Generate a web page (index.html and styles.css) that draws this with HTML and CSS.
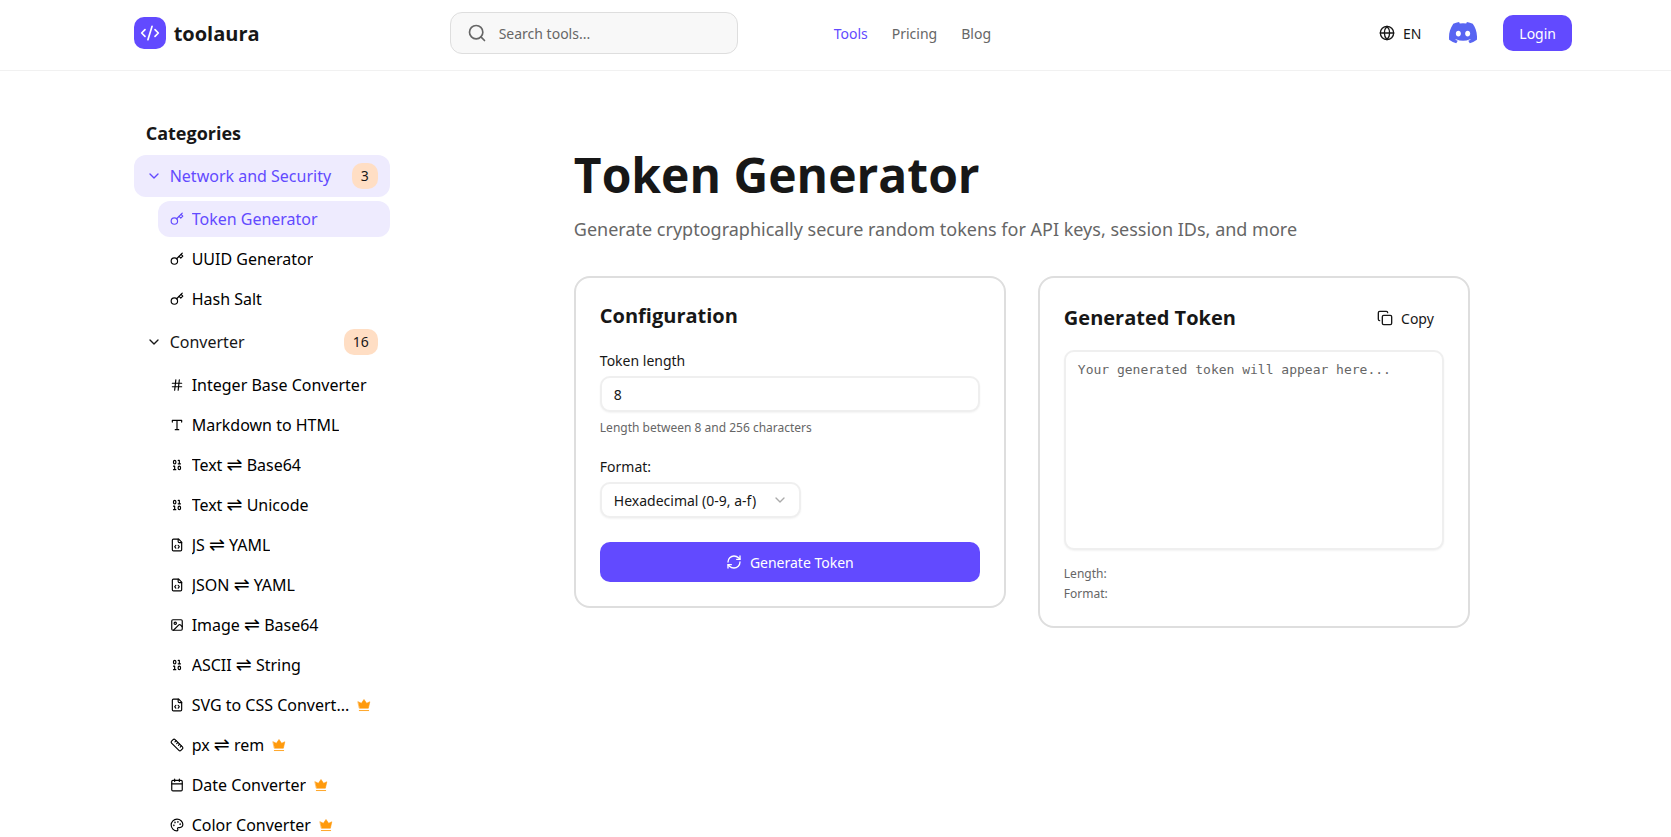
FILE: index.html
```
<!DOCTYPE html>
<html lang="en">
<head>
  <meta charset="UTF-8" />
  <meta name="viewport" content="width=device-width, initial-scale=1.0" />
  <title>Token Generator - toolaura</title>
  <link rel="stylesheet" href="styles.css">
</head>
<body>
  <!-- shared icons -->
  <svg class="sprite" aria-hidden="true">
    <symbol id="i-chevron" viewBox="0 0 24 24"><path d="m6 9 6 6 6-6"/></symbol>
    <symbol id="i-key" viewBox="0 0 24 24"><circle cx="7.5" cy="15.5" r="5.5"/><path d="m21 2-9.6 9.6"/><path d="m15.5 7.5 3 3L22 7l-3-3"/></symbol>
    <symbol id="i-hash" viewBox="0 0 24 24"><path d="M4 9h16M4 15h16M10 3 8 21M16 3l-2 18"/></symbol>
    <symbol id="i-type" viewBox="0 0 24 24"><path d="M4 7V4h16v3M9 20h6M12 4v16"/></symbol>
    <symbol id="i-binary" viewBox="0 0 24 24"><rect x="14" y="14" width="4" height="6" rx="2"/><rect x="6" y="4" width="4" height="6" rx="2"/><path d="M6 20h4M14 10h4M6 14h2v6M14 4h2v6"/></symbol>
    <symbol id="i-file" viewBox="0 0 24 24"><path d="M10 12.500 8 15l2 2.500M14 12.500l2 2.500-2 2.500"/><path d="M15 2H6a2 2 0 0 0-2 2v16a2 2 0 0 0 2 2h12a2 2 0 0 0 2-2V7z"/><path d="M14 2v4a2 2 0 0 0 2 2h4"/></symbol>
    <symbol id="i-image" viewBox="0 0 24 24"><rect x="3" y="3" width="18" height="18" rx="2"/><circle cx="9" cy="9" r="2"/><path d="m21 15-3.100-3.100a2 2 0 0 0-2.800 0L6 21"/></symbol>
    <symbol id="i-ruler" viewBox="0 0 24 24"><path d="M21.300 15.300a2.400 2.400 0 0 1 0 3.400l-2.600 2.600a2.400 2.400 0 0 1-3.400 0L2.700 8.700a2.400 2.400 0 0 1 0-3.400l2.600-2.600a2.400 2.400 0 0 1 3.400 0Z"/><path d="m14.500 12.500 2-2M11.500 9.500l2-2M8.500 6.500l2-2M17.500 15.500l2-2"/></symbol>
    <symbol id="i-calendar" viewBox="0 0 24 24"><path d="M8 2v4M16 2v4M3 10h18"/><rect x="3" y="4" width="18" height="18" rx="2"/></symbol>
    <symbol id="i-palette" viewBox="0 0 24 24"><circle cx="13.500" cy="6.500" r=".5"/><circle cx="17.500" cy="10.500" r=".5"/><circle cx="8.500" cy="7.500" r=".5"/><circle cx="6.500" cy="12.500" r=".5"/><path d="M12 2C6.500 2 2 6.500 2 12s4.500 10 10 10c.9 0 1.600-.7 1.600-1.700 0-.4-.2-.8-.4-1.100-.3-.3-.4-.7-.4-1.100a1.600 1.600 0 0 1 1.700-1.700h2c3 0 5.500-2.500 5.500-5.500C22 6 17.500 2 12 2z"/></symbol>
    <symbol id="i-crown" viewBox="0 0 24 24"><path d="M2 6.500 7.500 9 12 2.500 16.500 9 22 6.500 19.500 17.500h-15z" fill="currentColor" stroke-width="1"/><path d="M4 21.500h16" stroke-width="1.500"/></symbol>
  </svg>

  <header class="topbar">
    <a class="brand" href="#">
      <span class="brand-mark"><svg class="icon" viewBox="0 0 24 24"><path d="m18 16 4-4-4-4M6 8l-4 4 4 4M14.500 4l-5 16"/></svg></span>
      toolaura
    </a>
    <label class="search">
      <svg class="icon" viewBox="0 0 24 24"><circle cx="11" cy="11" r="8"/><path d="m21 21-4.300-4.300"/></svg>
      <input type="search" placeholder="Search tools..." aria-label="Search tools">
    </label>
    <nav class="main-nav">
      <a class="active" href="#">Tools</a>
      <a href="#">Pricing</a>
      <a href="#">Blog</a>
    </nav>
    <div class="actions">
      <button class="lang" type="button">
        <svg class="icon" viewBox="0 0 24 24"><circle cx="12" cy="12" r="10"/><path d="M12 2a14.500 14.500 0 0 0 0 20 14.500 14.500 0 0 0 0-20M2 12h20"/></svg>
        EN
      </button>
      <a class="discord" href="#" aria-label="Discord">
        <svg viewBox="0 0 127 96"><path d="M107.700 8.070A105.150 105.150 0 0 0 81.470 0a72.060 72.060 0 0 0-3.360 6.830 97.680 97.680 0 0 0-29.110 0A72.370 72.370 0 0 0 45.640 0a105.890 105.890 0 0 0-26.250 8.090C2.790 32.650-1.710 56.600.54 80.210a105.730 105.730 0 0 0 32.170 16.150 77.700 77.700 0 0 0 6.890-11.110 68.420 68.420 0 0 1-10.850-5.180c.91-.66 1.800-1.340 2.660-2a75.570 75.570 0 0 0 64.320 0c.87.71 1.760 1.390 2.660 2a68.680 68.680 0 0 1-10.870 5.190 77 77 0 0 0 6.890 11.100 105.250 105.250 0 0 0 32.190-16.140c2.640-27.380-4.510-51.110-18.900-72.150ZM42.450 65.690C36.180 65.690 31 60 31 53s5-12.740 11.430-12.740S54 46 53.890 53s-5.050 12.690-11.440 12.690Zm42.240 0C78.410 65.690 73.250 60 73.250 53s5-12.740 11.440-12.740S96.230 46 96.120 53s-5.040 12.690-11.430 12.690Z"/></svg>
      </a>
      <button class="btn btn-login" type="button">Login</button>
    </div>
  </header>

  <div class="layout">
    <aside class="sidebar">
      <h2>Categories</h2>
      <button class="category active" type="button"><svg class="icon"><use href="#i-chevron"/></svg>Network and Security<span class="badge">3</span></button>
      <ul class="tools">
        <li><a class="active" href="#"><svg class="icon"><use href="#i-key"/></svg><span>Token Generator</span></a></li>
        <li><a href="#"><svg class="icon"><use href="#i-key"/></svg><span>UUID Generator</span></a></li>
        <li><a href="#"><svg class="icon"><use href="#i-key"/></svg><span>Hash Salt</span></a></li>
      </ul>
      <button class="category" type="button"><svg class="icon"><use href="#i-chevron"/></svg>Converter<span class="badge">16</span></button>
      <ul class="tools">
        <li><a href="#"><svg class="icon"><use href="#i-hash"/></svg><span>Integer Base Converter</span></a></li>
        <li><a href="#"><svg class="icon"><use href="#i-type"/></svg><span>Markdown to HTML</span></a></li>
        <li><a href="#"><svg class="icon"><use href="#i-binary"/></svg><span>Text <i>⇌</i> Base64</span></a></li>
        <li><a href="#"><svg class="icon"><use href="#i-binary"/></svg><span>Text <i>⇌</i> Unicode</span></a></li>
        <li><a href="#"><svg class="icon"><use href="#i-file"/></svg><span>JS <i>⇌</i> YAML</span></a></li>
        <li><a href="#"><svg class="icon"><use href="#i-file"/></svg><span>JSON <i>⇌</i> YAML</span></a></li>
        <li><a href="#"><svg class="icon"><use href="#i-image"/></svg><span>Image <i>⇌</i> Base64</span></a></li>
        <li><a href="#"><svg class="icon"><use href="#i-binary"/></svg><span>ASCII <i>⇌</i> String</span></a></li>
        <li><a href="#"><svg class="icon"><use href="#i-file"/></svg><span>SVG to CSS Convert...</span><svg class="icon crown"><use href="#i-crown"/></svg></a></li>
        <li><a href="#"><svg class="icon"><use href="#i-ruler"/></svg><span>px <i>⇌</i> rem</span><svg class="icon crown"><use href="#i-crown"/></svg></a></li>
        <li><a href="#"><svg class="icon"><use href="#i-calendar"/></svg><span>Date Converter</span><svg class="icon crown"><use href="#i-crown"/></svg></a></li>
        <li><a href="#"><svg class="icon"><use href="#i-palette"/></svg><span>Color Converter</span><svg class="icon crown"><use href="#i-crown"/></svg></a></li>
      </ul>
    </aside>

    <main class="content">
      <h1>Token Generator</h1>
      <p class="lead">Generate cryptographically secure random tokens for API keys, session IDs, and more</p>

      <div class="cards">
        <section class="card">
          <h2>Configuration</h2>
          <form>
            <div class="field">
              <label for="token-length">Token length</label>
              <input class="control" id="token-length" type="text" inputmode="numeric" value="8">
              <p class="hint">Length between 8 and 256 characters</p>
            </div>
            <div class="field">
              <label for="token-format">Format:</label>
              <div class="select-wrap">
                <select class="control" id="token-format">
                  <option>Hexadecimal (0-9, a-f)</option>
                </select>
                <svg class="icon"><use href="#i-chevron"/></svg>
              </div>
            </div>
            <button class="btn btn-generate" type="button">
              <svg class="icon" viewBox="0 0 24 24"><path d="M3 12a9 9 0 0 1 9-9 9.750 9.750 0 0 1 6.740 2.740L21 8"/><path d="M21 3v5h-5M21 12a9 9 0 0 1-9 9 9.750 9.750 0 0 1-6.740-2.740L3 16"/><path d="M8 16H3v5"/></svg>
              Generate Token
            </button>
          </form>
        </section>

        <section class="card">
          <div class="card-head">
            <h2>Generated Token</h2>
            <button class="btn-copy" type="button">
              <svg class="icon" viewBox="0 0 24 24"><rect x="8" y="8" width="14" height="14" rx="2"/><path d="M4 16c-1.100 0-2-.9-2-2V4c0-1.100.9-2 2-2h10c1.100 0 2 .9 2 2"/></svg>
              Copy
            </button>
          </div>
          <textarea class="control output" readonly aria-label="Generated token" placeholder="Your generated token will appear here..."></textarea>
          <div class="meta">
            <p>Length:</p>
            <p>Format:</p>
          </div>
        </section>
      </div>
    </main>
  </div>
</body>
</html>
```
FILE: styles.css
```
* {
    box-sizing: border-box;
    margin: 0;
    padding: 0;
}
body {
    font-family: 'Noto Sans', 'Open Sans', 'DejaVu Sans', sans-serif;
    font-size: 14px;
    background: #fff;
    color: #171717;
}
h1, h2, .brand {
    font-family: 'Open Sans', 'Noto Sans', sans-serif;
    font-weight: 700;
}
button, input, select, textarea {
    font: inherit;
    color: inherit;
}
button {
    border: none;
    background: none;
    cursor: pointer;
}
a {
    color: inherit;
    text-decoration: none;
}
ul {
    list-style: none;
}
.sprite {
    display: none;
}
.icon {
    width: 16px;
    height: 16px;
    flex: none;
    fill: none;
    stroke: currentColor;
    stroke-width: 2;
    stroke-linecap: round;
    stroke-linejoin: round;
}

/* top bar */
.topbar {
    display: flex;
    align-items: center;
    padding: 12px 99px 16px 8%;
    border-bottom: 1px solid #f1f1f1;
}
.brand {
    display: flex;
    align-items: center;
    gap: 8px;
    flex: 0 0 316px;
    font-size: 20px;
}
.brand-mark {
    display: flex;
    align-items: center;
    justify-content: center;
    width: 32px;
    height: 32px;
    border-radius: 10px;
    background: #624aff;
    color: #fff;
}
.brand-mark .icon {
    width: 20px;
    height: 20px;
}
.search {
    display: flex;
    align-items: center;
    gap: 12px;
    width: 288px;
    height: 42px;
    padding: 0 16px;
    border: 1px solid #dedede;
    border-radius: 12px;
    background: #f8f8f8;
    color: #666;
}
.search .icon {
    width: 20px;
    height: 20px;
}
.search input {
    flex: 1;
    min-width: 0;
    border: none;
    outline: none;
    background: none;
}
::placeholder {
    color: #666;
    opacity: 1;
}
.main-nav {
    display: flex;
    gap: 24px;
    margin-left: 96px;
    color: #666;
}
.active {
    color: #624aff;
}
.actions {
    display: flex;
    align-items: center;
    margin-left: auto;
}
.lang {
    display: flex;
    align-items: center;
    gap: 8px;
}
.discord {
    display: flex;
    width: 28px;
    margin: 0 26px 0 28px;
    fill: #5865f2;
}
.btn {
    border-radius: 10px;
    background: #624aff;
    color: #fff;
}
.btn-login {
    height: 36px;
    padding: 0 16px;
}

/* sidebar */
.layout {
    display: flex;
    padding: 0 17px 0 8%;
}
.sidebar {
    flex: 0 0 256px;
    height: calc(100vh - 71px);
    padding-top: 48px;
    overflow: hidden;
    font-size: 16px;
}
.sidebar h2 {
    padding: 0 12px;
    margin-bottom: 8px;
    font-size: 18px;
    line-height: 28px;
}
.category {
    display: flex;
    align-items: center;
    gap: 8px;
    width: 100%;
    height: 42px;
    padding: 0 12px;
    border-radius: 12px;
}
.category.active, .tools .active {
    background: #eeebfe;
    color: #624aff;
}
.badge {
    margin-left: auto;
    padding: 0 9px;
    border-radius: 10px;
    background: #ffdec4;
    color: #171717;
    font-size: 14px;
    line-height: 26px;
}
.tools {
    display: grid;
    gap: 4px;
    padding: 4px 0 4px 24px;
}
.tools a {
    display: flex;
    align-items: center;
    gap: 8px;
    height: 36px;
    padding: 0 12px;
    border-radius: 12px;
    color: #000;
}
.tools .icon {
    width: 14px;
    height: 14px;
}
.tools span {
    overflow: hidden;
    text-overflow: ellipsis;
    white-space: nowrap;
    line-height: 24px;
}
/* two-way arrow */
.tools i {
    font-family: 'DejaVu Sans', sans-serif;
    font-size: 19px;
    font-style: normal;
    line-height: 16px;
}
.tools .crown {
    color: #ff9a0c;
}

/* main column */
.content {
    flex: 0 1 896px;
    min-width: 0;
    margin: 0 auto;
    padding-top: 80px;
}
h1 {
    font-size: 48px;
    line-height: 48px;
    margin-bottom: 16px;
}
.lead {
    margin-bottom: 33px;
    color: #666;
    font-size: 18px;
    line-height: 28px;
}
.cards {
    display: grid;
    grid-template-columns: 1fr 1fr;
    gap: 32px;
    align-items: start;
}
.card {
    padding: 24px;
    border: 2px solid #dedede;
    border-radius: 16px;
}
.card h2 {
    font-size: 20px;
    line-height: 28px;
}
.card form {
    display: grid;
    gap: 24px;
    margin-top: 24px;
}
.field {
    display: grid;
    gap: 8px;
}
.field label {
    line-height: 14px;
}
.control {
    width: 100%;
    height: 36px;
    padding: 0 12px;
    border: 2px solid #efefef;
    border-radius: 10px;
    background: #fff;
    box-shadow: 0 1px 2px rgba(0, 0, 0, 0.05);
    outline: none;
}
.hint, .meta {
    color: #666;
    font-size: 12px;
    line-height: 16px;
}
.select-wrap {
    display: flex;
    position: relative;
    width: 201px;
}
.select-wrap select {
    appearance: none;
}
.select-wrap .icon {
    position: absolute;
    top: 10px;
    right: 13px;
    color: #aaa;
    pointer-events: none;
}
.btn-generate {
    display: flex;
    align-items: center;
    justify-content: center;
    gap: 8px;
    height: 40px;
}
.card-head {
    display: flex;
    align-items: center;
    justify-content: space-between;
    margin-bottom: 16px;
}
.btn-copy {
    display: flex;
    align-items: center;
    gap: 8px;
    height: 32px;
    padding: 0 10px;
}
.output {
    display: block;
    height: 200px;
    padding: 8px 12px;
    resize: none;
    font-family: 'DejaVu Sans Mono', monospace;
    font-size: 13px;
    line-height: 20px;
}
.meta {
    display: grid;
    gap: 4px;
    margin-top: 16px;
}
```
